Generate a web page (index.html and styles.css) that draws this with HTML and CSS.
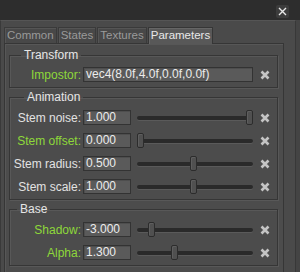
FILE: index.html
```html
<!DOCTYPE html>
<html lang="en">

<head>
    <meta charset="UTF-8">
    <title>Parameters</title>
    <link rel="stylesheet" href="styles.css">
</head>

<body>
    <div class="titlebar">
        <span class="close">
            <svg width="9" height="9" viewBox="0 0 9 9"><path d="M1 1L8 8M8 1L1 8" stroke="#e8e8e8" stroke-width="1.4" /></svg>
        </span>
    </div>
    <div class="window">
        <div class="tabs">
            <div class="tab">Common</div>
            <div class="tab">States</div>
            <div class="tab">Textures</div>
            <div class="tab active">Parameters</div>
        </div>
        <div class="frame">
            <fieldset class="group transform">
                <legend>Transform</legend>
                <div class="row">
                    <span class="name changed">Impostor:</span>
                    <span class="field wide">vec4(8.0f,4.0f,0.0f,0.0f)</span>
                    <span class="reset"><svg width="10" height="10" viewBox="0 0 10 10"><path d="M1.5 1.5L8.5 8.5M8.5 1.5L1.5 8.5" stroke="#c4c4c4" stroke-width="2.6" /></svg></span>
                </div>
            </fieldset>
            <fieldset class="group animation">
                <legend>Animation</legend>
                <div class="row">
                    <span class="name">Stem noise:</span>
                    <span class="field">1.000</span>
                    <span class="slider"><span class="groove"></span><span class="handle" style="left: 109px"></span></span>
                    <span class="reset"><svg width="10" height="10" viewBox="0 0 10 10"><path d="M1.5 1.5L8.5 8.5M8.5 1.5L1.5 8.5" stroke="#c4c4c4" stroke-width="2.6" /></svg></span>
                </div>
                <div class="row">
                    <span class="name changed">Stem offset:</span>
                    <span class="field">0.000</span>
                    <span class="slider"><span class="groove"></span><span class="handle" style="left: 0px"></span></span>
                    <span class="reset"><svg width="10" height="10" viewBox="0 0 10 10"><path d="M1.5 1.5L8.5 8.5M8.5 1.5L1.5 8.5" stroke="#c4c4c4" stroke-width="2.6" /></svg></span>
                </div>
                <div class="row">
                    <span class="name">Stem radius:</span>
                    <span class="field">0.500</span>
                    <span class="slider"><span class="groove"></span><span class="handle" style="left: 53px"></span></span>
                    <span class="reset"><svg width="10" height="10" viewBox="0 0 10 10"><path d="M1.5 1.5L8.5 8.5M8.5 1.5L1.5 8.5" stroke="#c4c4c4" stroke-width="2.6" /></svg></span>
                </div>
                <div class="row">
                    <span class="name">Stem scale:</span>
                    <span class="field">1.000</span>
                    <span class="slider"><span class="groove"></span><span class="handle" style="left: 53px"></span></span>
                    <span class="reset"><svg width="10" height="10" viewBox="0 0 10 10"><path d="M1.5 1.5L8.5 8.5M8.5 1.5L1.5 8.5" stroke="#c4c4c4" stroke-width="2.6" /></svg></span>
                </div>
            </fieldset>
            <fieldset class="group base">
                <legend>Base</legend>
                <div class="row">
                    <span class="name changed">Shadow:</span>
                    <span class="field">-3.000</span>
                    <span class="slider"><span class="groove"></span><span class="handle" style="left: 11px"></span></span>
                    <span class="reset"><svg width="10" height="10" viewBox="0 0 10 10"><path d="M1.5 1.5L8.5 8.5M8.5 1.5L1.5 8.5" stroke="#c4c4c4" stroke-width="2.6" /></svg></span>
                </div>
                <div class="row">
                    <span class="name changed">Alpha:</span>
                    <span class="field">1.300</span>
                    <span class="slider"><span class="groove"></span><span class="handle" style="left: 34px"></span></span>
                    <span class="reset"><svg width="10" height="10" viewBox="0 0 10 10"><path d="M1.5 1.5L8.5 8.5M8.5 1.5L1.5 8.5" stroke="#c4c4c4" stroke-width="2.6" /></svg></span>
                </div>
            </fieldset>
        </div>
    </div>
</body>

</html>
```

FILE: styles.css
```css
* {
    padding: 0;
    margin: 0;
    box-sizing: border-box;
}

body {
    width: 300px;
    height: 272px;
    overflow: hidden;
    background-color: #444444;
    font-family: "Liberation Sans", Arial, sans-serif;
    font-size: 12px;
    color: #e2e2e2;
}

.titlebar {
    height: 20px;
    background-color: #2d2d2d;
    display: flex;
    justify-content: flex-end;
    padding-top: 5px;
    padding-right: 11px;
}

.close {
    width: 13px;
    height: 13px;
    border-radius: 2px;
    background-color: #3c3c3c;
    display: flex;
    align-items: center;
    justify-content: center;
}

.window {
    width: 296px;
    height: 252px;
    background-color: #4a4a4a;
    border-top: 1px solid #555555;
    border-left: 1px solid #3a3a3a;
    border-right: 1px solid #383838;
    padding-left: 3px;
}

.tabs {
    display: flex;
    gap: 1px;
    margin-top: 6px;
    height: 16px;
}

.tab {
    height: 16px;
    padding: 0 2px;
    font-size: 11.5px;
    line-height: 15px;
    color: #9a9a9a;
    background-color: #484848;
    border: 1px solid #3a3a3a;
    border-bottom: none;
    box-shadow: inset 1px 1px 0 #555555;
}

.tab.active {
    color: #e8e8e8;
    background-color: #585858;
    border-color: #363636;
    box-shadow: inset 1px 1px 0 #666666;
    height: 17px;
    position: relative;
    z-index: 1;
}

.frame {
    width: 280px;
    height: 240px;
    background-color: #4c4c4c;
    border: 1px solid #363636;
    box-shadow: inset 1px 1px 0 #575757;
    padding: 4px 5px 0 4px;
}

.group {
    border: 1px solid #363636;
    box-shadow: inset 1px 1px 0 #585858, 1px 1px 0 #585858;
    padding: 0 0 5px 0;
    margin-bottom: 2px;
    min-inline-size: 0;
}

.group legend {
    font-size: 12px;
    line-height: 14px;
    padding: 0 3px;
    color: #e6e6e6;
}

.transform legend {
    margin-left: 11px;
}

.animation legend {
    margin-left: 14px;
}

.base legend {
    margin-left: 7px;
}

.transform {
    padding-top: 5px;
}

.animation,
.base {
    padding-top: 6px;
}

.row {
    display: flex;
    align-items: center;
    height: 15px;
}

.row + .row {
    margin-top: 8px;
}

.name {
    width: 71px;
    text-align: right;
    color: #e2e2e2;
    white-space: nowrap;
}

.name.changed {
    color: #8ed83a;
}

.field {
    width: 48px;
    height: 15px;
    margin-left: 2px;
    padding-left: 2px;
    line-height: 13px;
    background-color: #5a5a5a;
    border: 1px solid #333333;
    box-shadow: inset 1px 1px 0 #4e4e4e;
    color: #ececec;
    white-space: nowrap;
    overflow: hidden;
}

.field.wide {
    width: auto;
    flex: 1;
}

.slider {
    flex: 1;
    height: 15px;
    margin-left: 6px;
    position: relative;
    display: flex;
    align-items: center;
}

.groove {
    width: 100%;
    height: 4px;
    border-radius: 2px;
    background-color: #2a2a2a;
    box-shadow: 0 1px 0 #5a5a5a;
}

.handle {
    position: absolute;
    top: 0;
    width: 7px;
    height: 15px;
    border-radius: 2px;
    background-color: #505050;
    border: 1px solid #2c2c2c;
    box-shadow: inset 1px 1px 0 #5e5e5e;
}

.reset {
    width: 24px;
    display: flex;
    justify-content: center;
}
```
